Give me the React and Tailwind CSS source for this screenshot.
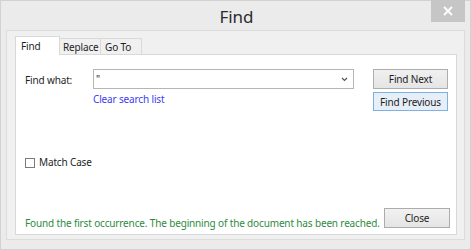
import React from 'react';

const ui = { fontFamily: '"Noto Sans", "Open Sans", sans-serif' };

function Chevron() {
  return (
    <svg width="7" height="5" viewBox="0 0 7 5" className="block">
      <path d="M1 1 L3.5 3.5 L6 1" fill="none" stroke="#555" strokeWidth="1.2" />
    </svg>
  );
}

function CloseX() {
  return (
    <svg width="10" height="10" viewBox="0 0 10 10" className="block">
      <path d="M1 1 L9 9 M9 1 L1 9" stroke="#fff" strokeWidth="1.8" />
    </svg>
  );
}

export default function App() {
  return (
    <div style={ui} className="w-[471px] h-[250px] bg-[#ebebeb] border border-[#d2d2d2] flex flex-col text-[10px] tracking-[-0.15px] text-[#1e1e1e]">
      {/* Title bar */}
      <div className="h-[29px] grid grid-cols-[1fr_auto_1fr]">
        <div />
        <div className="text-[17px] tracking-normal text-[#2b2b2b] leading-none pt-[7px] pl-[2px]">Find</div>
        <div className="flex justify-end items-start pr-[5px]">
          <div className="w-[34px] h-[22px] bg-[#c6c6c6] flex items-center justify-center -mt-[1px]">
            <CloseX />
          </div>
        </div>
      </div>

      {/* Group */}
      <div className="mx-[5px] mb-[9px] flex-1 bg-[#f0f0f0] border border-[#dcdcdc] pt-[5px] pl-[8px] pr-[7px] pb-[4px] flex flex-col">
        {/* Tabs */}
        <div className="flex items-end h-[19px] relative z-10">
          <div className="w-[45px] h-[19px] bg-white border border-b-0 border-[#d9d9d9] pl-[5px] pt-[2px]">Find</div>
          <div className="w-[41px] h-[17px] bg-[#f0f0f0] border border-l-0 border-[#d9d9d9] pl-[3px] leading-[16px] whitespace-nowrap">Replace</div>
          <div className="w-[41px] h-[17px] bg-[#f0f0f0] border border-l-0 border-[#d9d9d9] pl-[4px] leading-[16px]">Go To</div>
        </div>

        {/* Panel */}
        <div className="flex-1 -mt-[1px] bg-white border border-[#d9d9d9] flex flex-col pl-[9px] pr-[6px] pb-[6px]">
          <div className="flex pt-[14px]">
            <div className="w-[68px] pt-[4px]">Find what:</div>
            <div className="w-[261px] flex flex-col">
              <div className="h-[20px] border border-[#b5b5b5] flex items-center pl-[2px] pr-[5px]">
                <span className="flex-1 leading-none">"</span>
                <Chevron />
              </div>
              <div className="text-[#3c3cf2] mt-[3px] leading-[14px]">Clear search list</div>
            </div>
            <div className="ml-[19px] flex flex-col gap-[3px]">
              <button className="w-[75px] h-[20px] bg-gradient-to-b from-[#f0f0f0] to-[#e5e5e5] border border-[#adadad] text-[10px] text-[#1e1e1e] leading-none">Find Next</button>
              <button className="w-[75px] h-[19px] bg-[#e6eef7] border border-[#7fb0e4] text-[10px] text-[#1e1e1e] leading-none">Find Previous</button>
            </div>
          </div>

          <div className="flex items-center mt-[44px]">
            <div className="w-[10px] h-[10px] border border-[#7a7a7a] bg-white" />
            <span className="ml-[4px]">Match Case</span>
          </div>

          <div className="flex-1" />
          <div className="flex items-end justify-between gap-[2px]">
            <div className="text-[#2e8a3e] -mb-[3px] leading-[15px] whitespace-nowrap">Found the first occurrence. The beginning of the document has been reached.</div>
            <button className="w-[66px] h-[20px] shrink-0 bg-gradient-to-b from-[#f2f2f2] to-[#e4e4e4] border border-[#acacac] text-[10px] text-[#1e1e1e] leading-none">Close</button>
          </div>
        </div>
      </div>
    </div>
  );
}
